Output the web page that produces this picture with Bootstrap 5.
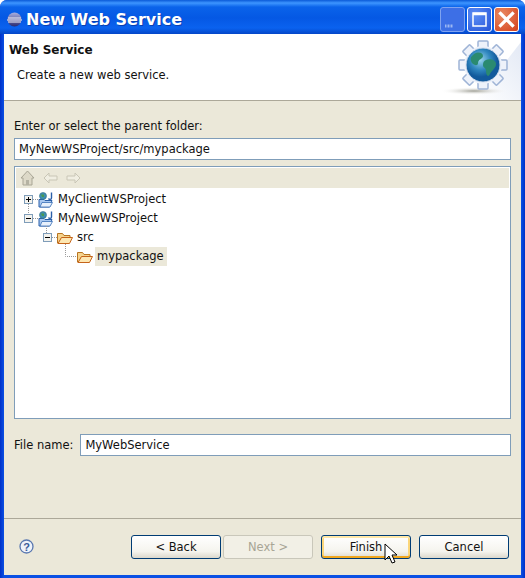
<!DOCTYPE html>
<html lang="en">
<head>
  <meta charset="UTF-8">
  <title>New Web Service</title>
  <meta name="viewport" content="width=device-width, initial-scale=1">
  <link rel="stylesheet" href="https://cdn.jsdelivr.net/npm/bootstrap@5.3.0/dist/css/bootstrap.min.css">
  <style>
    html, body { margin: 0; padding: 0; background: #fff; }
    body { width: 525px; height: 578px; overflow: hidden; font-family: "DejaVu Sans", sans-serif; font-size: 11.5px; color: #111; }
    .win { width: 525px; height: 578px; padding: 0 4px 3px 4px; border-radius: 7px 7px 0 0; background: linear-gradient(90deg, #0030c8 0, #0a50e4 4px, #0a50e4 521px, #0030c8 525px); }
    .titlebar { height: 34px; margin: 0 -4px; padding: 4px 6px 0 7px; background: linear-gradient(180deg, #0a5ad8 0, #3d95ff 3px, #0a63ea 7px, #0558e4 18px, #0a62ef 28px, #0446c8 34px); border-radius: 7px 7px 0 0; }
    .titletext { font-size: 16px; font-weight: 700; color: #fff; margin-left: 4px; padding-top: 1px; text-shadow: 1px 1px 0 #0a3fb0; }
    .capbtn { width: 25px; height: 25px; border: 1px solid #fff; border-radius: 3px; margin-left: 2px; flex: none; display: block; }
    .capbtn-min { background: #3d6fe6; border-color: #7fa3f0; }
    .capbtn-max { background: radial-gradient(circle at 30% 30%, #5c8df5, #2453d8); }
    .capbtn-close { background: radial-gradient(circle at 30% 30%, #e98a62, #d4401c); }
    .panel { height: 541px; background: #ebe8d9; }
    .headarea { height: 67px; background: #fff; border-bottom: 1px solid #aca899; padding: 9px 0 0 5px; position: relative; }
    .headtitle { font-weight: 700; font-size: 12px; line-height: 15px; }
    .headsub { margin: 10px 0 0 8px; line-height: 15px; }
    .headlogo { position: absolute; right: 0; top: 0; }
    .fieldlabel { line-height: 15px; }
    .formarea { padding: 18px 10px 0 10px; }
    .xpinput { height: 22px; border: 1px solid #7f9db9; background: #fff; padding: 0 4px; line-height: 21px; }
    .treebox { height: 253px; border: 1px solid #7f9db9; background: #fff; margin-top: 6px; padding: 1px; }
    .treetools { height: 20px; margin-bottom: 2px; background: #ebe8d9; padding-left: 4px; }
    .treerow { height: 19px; line-height: 19px; white-space: nowrap; }
    .treerow-0 { padding-left: 8px; }
    .treerow-1 { padding-left: 27px; }
    .treerow-2 { padding-left: 47px; }
    .treeselected { background: #ebe8d9; padding: 0 3px 0 2px; margin-left: -2px; }
    .expander { width: 9px; height: 9px; flex: none; margin-right: 5px; overflow: visible; }
    .nodeicon { flex: none; margin-right: 4px; }
    .filerow { margin-top: 15px; }
    .filerow .xpinput { flex: 1; margin-left: 7px; }
    .footarea { margin-top: 62px; border-top: 1px solid #aca899; height: 59px; padding: 16px 12px 0 15px; position: relative; }
    .xpbtn { width: 90px; height: 24px; padding: 1px 0 0; margin-left: 2px; font: inherit; color: #111; border: 1px solid #003c74; border-radius: 3px; background: linear-gradient(180deg, #fff 0, #f5f4ee 70%, #dcd8cc 100%); line-height: 21px; text-align: center; display: block; }
    .xpbtn:disabled { color: #a8a595; border-color: #c9c7ba; background: #f2f0e6; }
    .xpbtn-default { box-shadow: inset 0 2px 0 #ffe8a8, inset 0 -2px 0 #f0a71f, inset 2px 0 0 #fbd67a, inset -2px 0 0 #fbd67a; }
    .gap-after { margin-left: 8px; }
    .mousecursor { position: absolute; left: 380px; top: 24px; }
  </style>
</head>
<body>
  <svg width="0" height="0" class="position-absolute">
    <defs>
      <symbol id="icon-project" viewBox="0 0 16 16">
        <path d="M1 7.500h5l1 1h7l-2.500 6.500H1z" fill="#a9c8f0" stroke="#2a5fa8"/>
        <path d="M2 15l2-4.500h10.500L12 15z" fill="#e8f0fb" stroke="#3a70b8" stroke-width=".8"/>
        <circle cx="5" cy="4" r="3.500" fill="#3f8fb0" stroke="#2f6d88" stroke-width=".6"/>
        <path d="M3 2.500h3v2.500H4z" fill="#4a9a50"/>
        <path d="M13.500 .5v5.500c0 1.700-2.500 1.700-3 .5" fill="none" stroke="#2a5fa8" stroke-width="1.400"/>
      </symbol>
      <symbol id="icon-folder" viewBox="0 0 16 12">
        <path d="M.5 11V1.500h5l1.500 2h6v2.500H4.500L1.500 11.500z" fill="#f6d48e" stroke="#b87420"/>
        <path d="M1 11.500L4.500 5.500h11l-3 6z" fill="#fde7b2" stroke="#c5641a"/>
      </symbol>
    </defs>
  </svg>
  <div class="win">
    <div class="titlebar d-flex align-items-center">
      <svg width="15" height="15" viewBox="0 0 15 15"><defs><linearGradient id="ecl" x1="0" y1="0" x2="0" y2="1"><stop offset="0" stop-color="#a8aee0"/><stop offset="1" stop-color="#2a2a70"/></linearGradient></defs><circle cx="7.500" cy="7.500" r="7" fill="url(#ecl)"/><path d="M1 6h13M0 8h15M1 10h13" stroke="#fff" stroke-width=".9"/></svg>
      <span class="titletext flex-grow-1">New Web Service</span>
      <svg class="capbtn capbtn-min" viewBox="0 0 23 23"><path d="M4 18h8" stroke="#9db8f2" stroke-width="3" stroke-dasharray="1 .5"/></svg>
      <svg class="capbtn capbtn-max" viewBox="0 0 23 23"><rect x="5" y="5" width="13" height="13" fill="none" stroke="#fff" stroke-width="1.500"/><path d="M5 6h13" stroke="#fff" stroke-width="2.500"/></svg>
      <svg class="capbtn capbtn-close" viewBox="0 0 23 23"><path d="M5.500 5.500l12 12M17.500 5.500l-12 12" stroke="#fff" stroke-width="3.200" stroke-linecap="square"/></svg>
    </div>
    <div class="panel">
      <div class="headarea">
        <div class="headtitle">Web Service</div>
        <div class="headsub">Create a new web service.</div>
        <svg class="headlogo" width="100" height="66" viewBox="0 0 100 66">
          <defs>
            <radialGradient id="glob" cx="42%" cy="35%"><stop offset="0" stop-color="#9ad6ec"/><stop offset=".6" stop-color="#2f86bf"/><stop offset="1" stop-color="#125a9c"/></radialGradient>
            <radialGradient id="shad"><stop offset="0" stop-color="#a0a096"/><stop offset="1" stop-color="#fff" stop-opacity="0"/></radialGradient>
            <linearGradient id="swash" x1="0" y1="1" x2="1" y2="0"><stop offset="0" stop-color="#fff"/><stop offset="1" stop-color="#e3e9f5"/></linearGradient>
          </defs>
          <path d="M55 66L100 8V66Z" fill="url(#swash)"/>
          <ellipse cx="53" cy="57" rx="34" ry="4" fill="url(#shad)"/>
          <g transform="translate(62 31)" fill="#eef2fa" stroke="#9fb4d6" stroke-width="1.500">
            <rect x="-5" y="-24" width="10" height="8" rx="1"/>
            <rect x="-5" y="-24" width="10" height="8" rx="1" transform="rotate(45)"/>
            <rect x="-5" y="-24" width="10" height="8" rx="1" transform="rotate(90)"/>
            <rect x="-5" y="-24" width="10" height="8" rx="1" transform="rotate(135)"/>
            <rect x="-5" y="-24" width="10" height="8" rx="1" transform="rotate(180)"/>
            <rect x="-5" y="-24" width="10" height="8" rx="1" transform="rotate(225)"/>
            <rect x="-5" y="-24" width="10" height="8" rx="1" transform="rotate(270)"/>
            <rect x="-5" y="-24" width="10" height="8" rx="1" transform="rotate(315)"/>
            <circle r="19" stroke="none"/>
            <circle r="17" fill="url(#glob)" stroke="#d5deee" stroke-width="1"/>
            <path d="M-9-11c5-3 9-1 9 2s-5 3-5 7-6 2-7-2 1-5 3-7zM3-5c4-2 10 0 10 4s-4 6-6 10-4 1-4-3-3-3-3-6 1-4 3-5z" fill="#2a8a70" stroke="none"/>
          </g>
        </svg>
      </div>
      <div class="formarea">
        <div class="fieldlabel">Enter or select the parent folder:</div>
        <div class="xpinput mt-1">MyNewWSProject/src/mypackage</div>
        <div class="treebox">
          <div class="treetools d-flex align-items-center gap-1">
            <svg width="15" height="16" viewBox="0 0 15 16"><path d="M7.500 1L1 8h2v7h9V8h2z" fill="#ddd9c8" stroke="#a8a595"/><rect x="6" y="10" width="3" height="5" fill="#b5b2a2"/></svg>
            <svg width="15" height="12" viewBox="0 0 15 12" class="ms-1"><path d="M1 6l5-5v3h8v4H6v3z" fill="#f0eee2" stroke="#c9c6b6"/></svg>
            <svg width="15" height="12" viewBox="0 0 15 12" class="ms-1"><path d="M14 6L9 1v3H1v4h8v3z" fill="#f0eee2" stroke="#c9c6b6"/></svg>
          </div>
          <div class="treerow treerow-0 d-flex align-items-center">
            <svg class="expander" viewBox="0 0 9 9"><path d="M4.500 9v10M9 4.500h5" stroke="#999" stroke-dasharray="1 1"/><rect x=".5" y=".5" width="8" height="8" fill="#f4f3ee" stroke="#7f9db9"/><path d="M2 4.500h5M4.500 2v5" stroke="#000"/></svg>
            <svg class="nodeicon" width="16" height="16"><use href="#icon-project"/></svg>
            <span>MyClientWSProject</span>
          </div>
          <div class="treerow treerow-0 d-flex align-items-center">
            <svg class="expander" viewBox="0 0 9 9"><path d="M9 4.500h5" stroke="#999" stroke-dasharray="1 1"/><rect x=".5" y=".5" width="8" height="8" fill="#f4f3ee" stroke="#7f9db9"/><path d="M2 4.500h5" stroke="#000"/></svg>
            <svg class="nodeicon" width="16" height="16"><use href="#icon-project"/></svg>
            <span>MyNewWSProject</span>
          </div>
          <div class="treerow treerow-1 d-flex align-items-center">
            <svg class="expander" viewBox="0 0 9 9"><path d="M3.500 -7V0M9 4.500h5" stroke="#999" stroke-dasharray="1 1"/><rect x=".5" y=".5" width="8" height="8" fill="#f4f3ee" stroke="#7f9db9"/><path d="M2 4.500h5" stroke="#000"/></svg>
            <svg class="nodeicon" width="16" height="12"><use href="#icon-folder"/></svg>
            <span>src</span>
          </div>
          <div class="treerow treerow-2 d-flex align-items-center">
            <svg class="expander" viewBox="0 0 9 9"><path d="M2.500 -8V4.500H13" fill="none" stroke="#999" stroke-dasharray="1 1"/></svg>
            <svg class="nodeicon" width="16" height="12"><use href="#icon-folder"/></svg>
            <span class="treeselected">mypackage</span>
          </div>
        </div>
        <div class="filerow d-flex align-items-center">
          <span class="fieldlabel">File name:</span>
          <div class="xpinput">MyWebService</div>
        </div>
      </div>
      <div class="footarea d-flex align-items-start">
        <svg width="15" height="15" viewBox="0 0 15 15" class="mt-1"><circle cx="7.500" cy="7.500" r="6.500" fill="#eef2fa" stroke="#5a78b0" stroke-width="1.300"/><text x="7.500" y="11.500" text-anchor="middle" font-family="Liberation Sans, sans-serif" font-weight="700" font-size="11" fill="#3a5a98">?</text></svg>
        <div class="d-flex ms-auto">
          <button type="button" class="xpbtn">&lt; Back</button>
          <button type="button" class="xpbtn" disabled>Next &gt;</button>
          <button type="button" class="xpbtn xpbtn-default gap-after">Finish</button>
          <button type="button" class="xpbtn gap-after">Cancel</button>
        </div>
        <svg class="mousecursor" width="14" height="22" viewBox="0 0 14 22"><path d="M1 1v16l4-4 3 7 3-1-3-7h5z" fill="#fff" stroke="#000"/></svg>
      </div>
    </div>
  </div>
  <script src="https://cdn.jsdelivr.net/npm/bootstrap@5.3.0/dist/js/bootstrap.bundle.min.js"></script>
</body>
</html>
